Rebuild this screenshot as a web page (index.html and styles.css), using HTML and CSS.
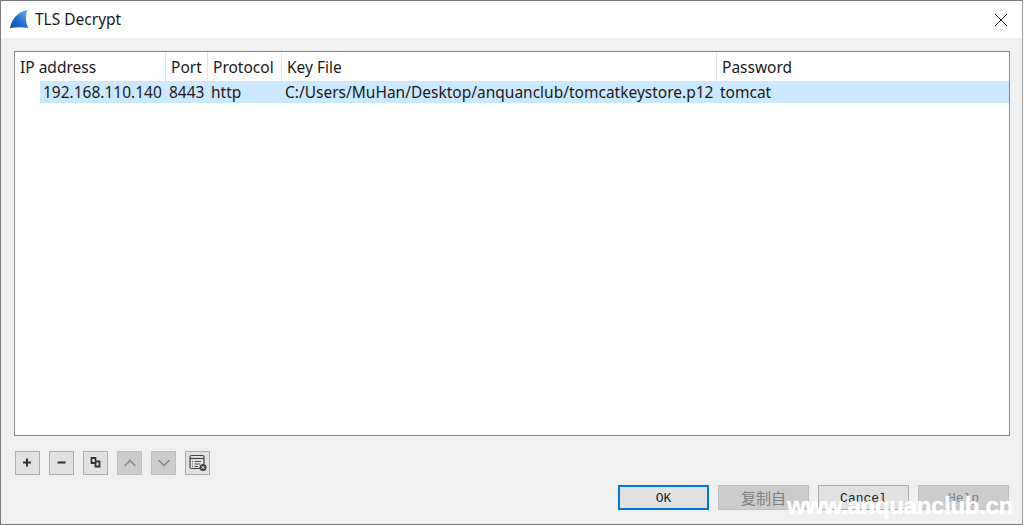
FILE: index.html
```html
<!DOCTYPE html>
<html lang="en">
<head>
<meta charset="utf-8">
<title>TLS Decrypt</title>
<link rel="stylesheet" href="styles.css">
</head>
<body>
<div class="window">
  <header class="titlebar">
    <svg class="logo" width="20" height="20" viewBox="0 0 20 20">
      <defs><linearGradient id="fin" x1="1" y1="0" x2="0" y2="1"><stop offset="0" stop-color="#7db8e4"/><stop offset="0.55" stop-color="#1f6fd0"/><stop offset="1" stop-color="#0a45b0"/></linearGradient></defs>
      <path d="M0 19C1.500 11 7 3 17.500 1C15.500 6 15 13 18.500 19C12 18 6 18 0 19Z" fill="url(#fin)"/>
    </svg>
    <span class="title">TLS Decrypt</span>
    <svg class="close" width="14" height="14" viewBox="0 0 14 14"><path d="M1 1L13 13M13 1L1 13" stroke="#222" stroke-width="1" fill="none"/></svg>
  </header>
  <main class="content">
    <div class="table">
      <div class="row head">
        <div class="cell c1">IP address</div>
        <div class="cell c2">Port</div>
        <div class="cell c3">Protocol</div>
        <div class="cell c4">Key File</div>
        <div class="cell c5">Password</div>
      </div>
      <div class="row data">
        <div class="cell c1"><span class="sel">192.168.110.140</span></div>
        <div class="cell c2">8443</div>
        <div class="cell c3">http</div>
        <div class="cell c4">C:/Users/MuHan/Desktop/anquanclub/tomcatkeystore.p12</div>
        <div class="cell c5">tomcat</div>
      </div>
    </div>
    <div class="tools">
      <button class="tool"><svg width="12" height="12" viewBox="0 0 12 12"><path d="M5 1.500V9.500M1 5.500H9" stroke="#333" stroke-width="2"/></svg></button>
      <button class="tool"><svg width="12" height="12" viewBox="0 0 12 12"><path d="M1.500 5.500H9.500" stroke="#333" stroke-width="2"/></svg></button>
      <button class="tool"><svg width="12" height="12" viewBox="0 0 12 12"><path d="M1.500 1H5.500V6H1.500ZM5.500 4.500H9.500V9.500H5.500Z" fill="#eee" stroke="#333" stroke-width="1.800"/></svg></button>
      <button class="tool off"><svg width="14" height="12" viewBox="0 0 14 12"><path d="M1.500 9L7 3.500L12.500 9" fill="none" stroke="#888" stroke-width="1.600"/></svg></button>
      <button class="tool off"><svg width="14" height="12" viewBox="0 0 14 12"><path d="M1.500 3L7 8.500L12.500 3" fill="none" stroke="#888" stroke-width="1.600"/></svg></button>
      <button class="tool"><svg width="18" height="18" viewBox="0 0 18 18"><rect x="1" y="1.500" width="14" height="13" rx="1.500" fill="none" stroke="#444" stroke-width="1.200"/><path d="M1 4.500H15" stroke="#444" stroke-width="1.200"/><path d="M3 7.500H4M5.500 7.500H12M3 10H4M5.500 10H11M3 12.500H4M5.500 12.500H9" stroke="#555"/><circle cx="14" cy="13.500" r="3.500" fill="#444"/><path d="M12.700 12.200L15.300 14.800M15.300 12.200L12.700 14.800" stroke="#fff"/></svg></button>
    </div>
    <div class="actions">
      <button class="btn default">OK</button>
      <button class="btn disabled">复制自</button>
      <button class="btn">Cancel</button>
      <button class="btn disabled">Help</button>
    </div>
  </main>
  <div class="watermark">www.anquanclub.cn</div>
</div>
</body>
</html>
```

FILE: styles.css
```css
* { box-sizing: border-box; }
html, body { margin: 0; height: 100%; overflow: hidden; background: #fff; }
.window {
  position: relative;
  width: 1023px;
  height: 525px;
  display: flex;
  flex-direction: column;
  border: 1px solid #7a7a7a;
  border-right-color: #9a9a9a;
  font-family: "Noto Sans", "Noto Sans CJK SC", sans-serif;
  font-size: 15.5px;
  color: #1a1a1a;
  overflow: hidden;
}
.titlebar {
  height: 37px;
  flex: none;
  background: #fff;
  display: flex;
  align-items: center;
  padding: 0 14px 2px 9px;
}
.logo { flex: none; margin-right: 5px; }
.title { flex: 1; }
.close { margin-top: 2px; }
.content {
  flex: 1;
  background: #f0f0f0;
  display: flex;
  flex-direction: column;
  padding: 13px 13px 13px;
}
.table {
  height: 385px;
  flex: none;
  width: 996px;
  background: #fff;
  border: 1px solid #828790;
}
.row { display: flex; }
.head { height: 29px; }
.data { height: 22px; background: #cce8ff; margin-left: 25px; }
.cell {
  white-space: nowrap;
  line-height: 22px;
  flex: none;
}
.head .cell {
  line-height: 30px;
  border-right: 1px solid #e5e5e5;
  padding-left: 5px;
}
.c1 { width: 151px; }
.c2 { width: 42px; }
.c3 { width: 74px; }
.c4 { width: 435px; }
.c5 { flex: 1; }
.head .c5 { border-right: 0; }
.data .c1 { width: 126px; padding-left: 3px; }
.data .c2 { padding-left: 3px; }
.data .c3 { padding-left: 3px; }
.data .c4 { padding-left: 3px; }
.data .c5 { padding-left: 3px; }
.tools {
  display: flex;
  gap: 9px;
  margin-top: 15px;
  padding-left: 1px;
}
.tool {
  width: 25px;
  height: 24px;
  padding: 0;
  background: #e1e1e1;
  border: 1px solid #adadad;
  display: flex;
  align-items: center;
  justify-content: center;
}
.tool.off { background: #cccccc; border-color: #bfbfbf; }
.actions {
  display: flex;
  justify-content: flex-end;
  gap: 9px;
  margin-top: 10px;
}
.btn {
  width: 91px;
  height: 25px;
  padding: 2px 0 0;
  background: #e1e1e1;
  border: 1px solid #adadad;
  font-family: "Liberation Mono", "Noto Sans CJK SC", monospace;
  font-size: 13px;
  color: #222;
}
.btn.default { border: 2px solid #0078d7; }
.btn.disabled { background: #cccccc; border-color: #bfbfbf; color: #808080; }
.btn.disabled:nth-child(2) { font-size: 15px; padding: 0; }
.watermark {
  position: absolute;
  right: 9px;
  bottom: 6px;
  font-family: "Liberation Sans", sans-serif;
  font-size: 24px;
  line-height: 25px;
  font-weight: 700;
  letter-spacing: -0.3px;
  color: #fff;
  text-shadow: 0 0 1px rgba(255,255,255,.7);
  white-space: nowrap;
}
```
